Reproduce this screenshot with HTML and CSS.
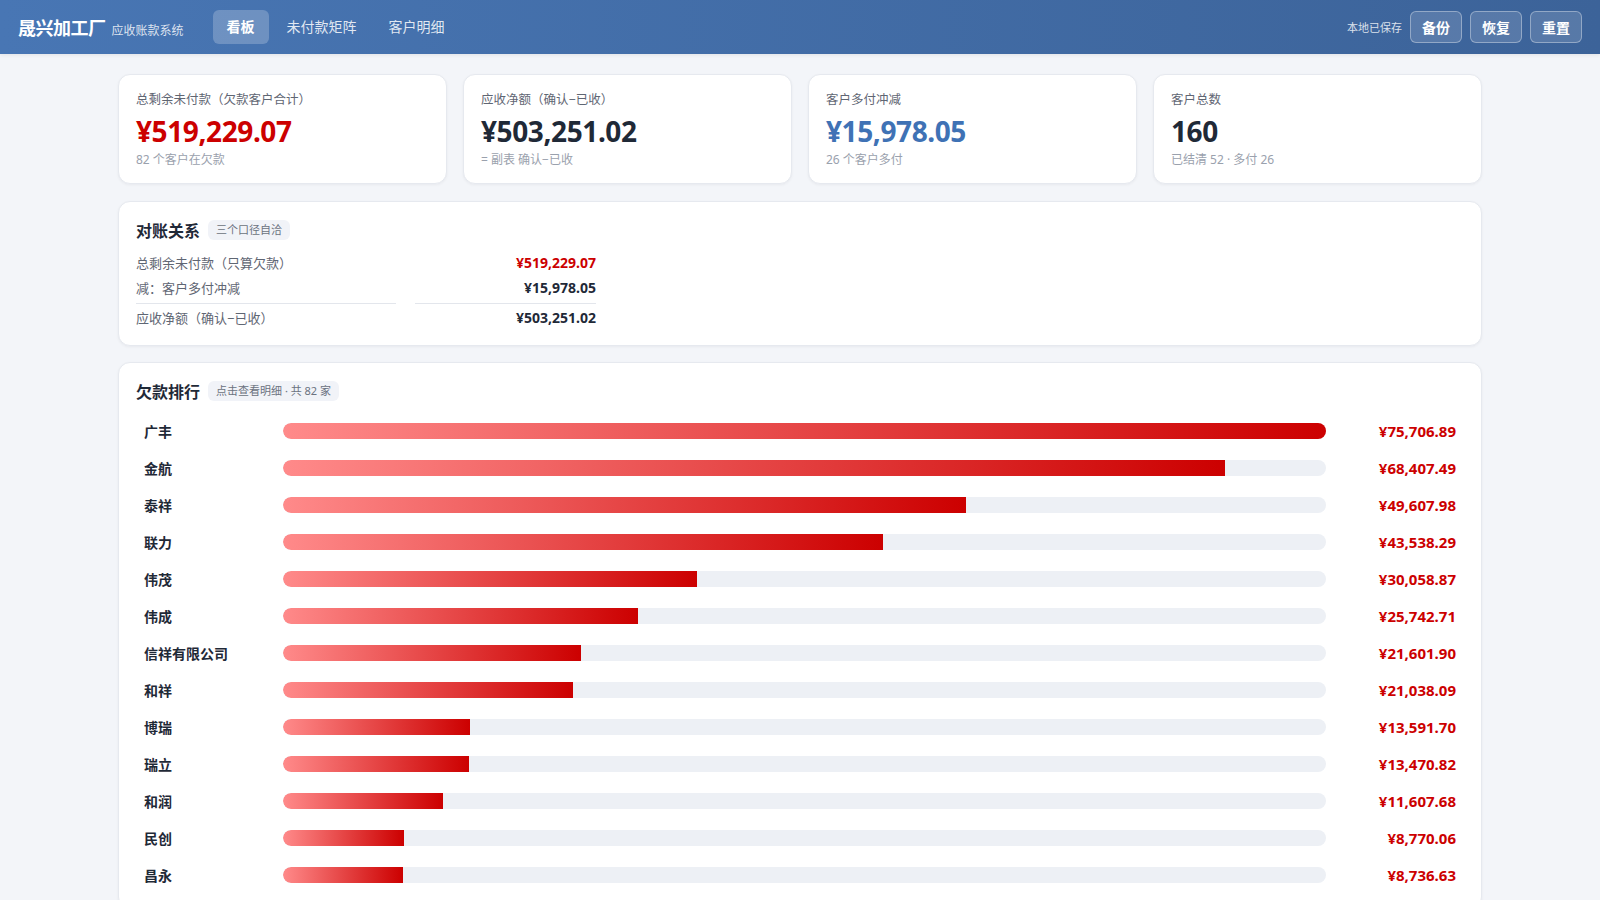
FILE: index.html
```html
<!doctype html>
<html lang="zh-CN">
<head>
    <meta charset="utf-8"/>
    <title>晟兴加工厂 应收账款系统</title>
    <link rel="stylesheet" href="styles.css">
</head>
<body>

    <!--顶栏-->
    <div class="topbar">
        <div class="brand">
            <span class="brand-name">晟兴加工厂</span>
            <span class="brand-sub">应收账款系统</span>
        </div>
        <ul class="nav">
            <li class="current">看板</li>
            <li>未付款矩阵</li>
            <li>客户明细</li>
        </ul>
        <div class="tools">
            <span class="saved">本地已保存</span>
            <button class="btn">备份</button>
            <button class="btn">恢复</button>
            <button class="btn">重置</button>
        </div>
    </div>

    <div class="main">
        <!--统计卡片-->
        <div class="stats">
            <div class="card stat">
                <div class="stat-label">总剩余未付款（欠款客户合计）</div>
                <div class="stat-value red">¥519,229.07</div>
                <div class="stat-sub">82 个客户在欠款</div>
            </div>
            <div class="card stat">
                <div class="stat-label">应收净额（确认−已收）</div>
                <div class="stat-value">¥503,251.02</div>
                <div class="stat-sub">= 副表 确认−已收</div>
            </div>
            <div class="card stat">
                <div class="stat-label">客户多付冲减</div>
                <div class="stat-value blue">¥15,978.05</div>
                <div class="stat-sub">26 个客户多付</div>
            </div>
            <div class="card stat">
                <div class="stat-label">客户总数</div>
                <div class="stat-value">160</div>
                <div class="stat-sub">已结清 52 · 多付 26</div>
            </div>
        </div>

        <!--对账关系-->
        <div class="card block">
            <div class="block-head">
                <h2>对账关系</h2>
                <span class="tag">三个口径自洽</span>
            </div>
            <div class="recon">
                <div class="recon-label">总剩余未付款（只算欠款）</div>
                <div class="recon-num red">¥519,229.07</div>
                <div class="recon-label">减：客户多付冲减</div>
                <div class="recon-num">¥15,978.05</div>
                <div class="recon-label total">应收净额（确认−已收）</div>
                <div class="recon-num total">¥503,251.02</div>
            </div>
        </div>

        <!--欠款排行-->
        <div class="card block">
            <div class="block-head">
                <h2>欠款排行</h2>
                <span class="tag">点击查看明细 · 共 82 家</span>
            </div>
            <div class="rank">
                <div class="rank-row"><span class="rank-name">广丰</span><div class="track"><div class="fill" style="width:100%"></div></div><span class="rank-num">¥75,706.89</span></div>
                <div class="rank-row"><span class="rank-name">金航</span><div class="track"><div class="fill" style="width:90.358%"></div></div><span class="rank-num">¥68,407.49</span></div>
                <div class="rank-row"><span class="rank-name">泰祥</span><div class="track"><div class="fill" style="width:65.526%"></div></div><span class="rank-num">¥49,607.98</span></div>
                <div class="rank-row"><span class="rank-name">联力</span><div class="track"><div class="fill" style="width:57.509%"></div></div><span class="rank-num">¥43,538.29</span></div>
                <div class="rank-row"><span class="rank-name">伟茂</span><div class="track"><div class="fill" style="width:39.704%"></div></div><span class="rank-num">¥30,058.87</span></div>
                <div class="rank-row"><span class="rank-name">伟成</span><div class="track"><div class="fill" style="width:34.003%"></div></div><span class="rank-num">¥25,742.71</span></div>
                <div class="rank-row"><span class="rank-name">信祥有限公司</span><div class="track"><div class="fill" style="width:28.533%"></div></div><span class="rank-num">¥21,601.90</span></div>
                <div class="rank-row"><span class="rank-name">和祥</span><div class="track"><div class="fill" style="width:27.789%"></div></div><span class="rank-num">¥21,038.09</span></div>
                <div class="rank-row"><span class="rank-name">博瑞</span><div class="track"><div class="fill" style="width:17.953%"></div></div><span class="rank-num">¥13,591.70</span></div>
                <div class="rank-row"><span class="rank-name">瑞立</span><div class="track"><div class="fill" style="width:17.793%"></div></div><span class="rank-num">¥13,470.82</span></div>
                <div class="rank-row"><span class="rank-name">和润</span><div class="track"><div class="fill" style="width:15.332%"></div></div><span class="rank-num">¥11,607.68</span></div>
                <div class="rank-row"><span class="rank-name">民创</span><div class="track"><div class="fill" style="width:11.584%"></div></div><span class="rank-num">¥8,770.06</span></div>
                <div class="rank-row"><span class="rank-name">昌永</span><div class="track"><div class="fill" style="width:11.540%"></div></div><span class="rank-num">¥8,736.63</span></div>
            </div>
        </div>
    </div>

</body>
</html>
```

FILE: styles.css
```css
* {
    padding: 0;
    margin: 0;
    list-style: none;
    box-sizing: border-box;
}

body {
    background: #f3f5f9;
    font-family: "Noto Sans", "Noto Sans CJK SC", sans-serif;
    color: #1f2937;
}

/* 顶栏 */
.topbar {
    height: 54px;
    display: flex;
    align-items: center;
    padding: 0 18px;
    background: linear-gradient(90deg, #4876b4, #3c6399);
    box-shadow: 0 1px 4px rgba(0, 0, 0, 0.08);
    color: #fff;
}

.brand {
    display: flex;
    align-items: baseline;
    gap: 6px;
    margin-right: 29px;
}

.brand-name {
    font-size: 18px;
    font-weight: bold;
    letter-spacing: -0.5px;
}

.brand-sub {
    font-size: 12px;
    color: rgba(255, 255, 255, 0.82);
}

.nav {
    display: flex;
    gap: 4px;
}

.nav li {
    height: 34px;
    line-height: 34px;
    padding: 0 14px;
    border-radius: 6px;
    font-size: 14px;
    color: rgba(255, 255, 255, 0.85);
    cursor: pointer;
}

.nav li.current {
    background: rgba(255, 255, 255, 0.22);
    color: #fff;
    font-weight: bold;
}

.tools {
    margin-left: auto;
    display: flex;
    align-items: center;
    gap: 8px;
}

.saved {
    font-size: 11px;
    color: rgba(255, 255, 255, 0.82);
}

.btn {
    width: 52px;
    height: 32px;
    border: 1px solid rgba(255, 255, 255, 0.35);
    border-radius: 6px;
    background: rgba(255, 255, 255, 0.14);
    color: #fff;
    font-family: inherit;
    font-size: 14px;
    font-weight: bold;
    cursor: pointer;
}

/* 主体 */
.main {
    max-width: 1400px;
    margin: 0 auto;
    padding: 20px 18px 20px;
}

.card {
    background: #fff;
    border: 1px solid #e6e9ef;
    border-radius: 12px;
    box-shadow: 0 1px 3px rgba(15, 23, 42, 0.05);
}

.red {
    color: #cc0000;
}

.blue {
    color: #3f72b5;
}

.stats {
    display: grid;
    grid-template-columns: repeat(4, 1fr);
    gap: 16px;
    margin-bottom: 17px;
}

.stat {
    padding: 16px 17px 14px;
}

.stat-label {
    font-size: 12.5px;
    line-height: 18px;
    color: #5f6673;
}

.stat-value {
    margin-top: 6px;
    font-size: 28px;
    line-height: 33px;
    font-weight: bold;
    letter-spacing: -0.4px;
}

.stat-sub {
    margin-top: 3px;
    font-size: 12px;
    line-height: 18px;
    color: #9aa1ad;
}

.block {
    padding: 17px 17px 14px;
    margin-bottom: 16px;
}

.block-head {
    display: flex;
    align-items: center;
    gap: 8px;
    height: 22px;
}

.block-head h2 {
    font-size: 16px;
    font-weight: bold;
    color: #1f2937;
}

.tag {
    font-size: 11px;
    line-height: 20px;
    padding: 0 8px;
    border-radius: 6px;
    background: #f1f3f8;
    color: #6b7280;
}

/* 对账 */
.recon {
    display: grid;
    grid-template-columns: 260px 181px;
    column-gap: 19px;
    margin-top: 10px;
}

.recon-label,
.recon-num {
    font-size: 13px;
    line-height: 20.5px;
    padding: 2px 0;
}

.recon-label {
    color: #5f6673;
}

.recon-num {
    text-align: right;
    font-weight: bold;
    font-size: 14px;
}

.recon .total {
    margin-top: 3px;
    padding-top: 4px;
    border-top: 1px solid #e3e6ec;
}

/* 排行 */
.rank {
    margin-top: 11px;
}

.rank-row {
    display: grid;
    grid-template-columns: 127px 1fr 118px;
    column-gap: 12px;
    align-items: center;
    height: 37px;
    padding: 0 8px;
    cursor: pointer;
}

.rank-name {
    font-size: 14px;
    font-weight: bold;
    color: #1f2937;
}

.track {
    height: 16px;
    border-radius: 8px;
    background: #edf0f5;
    overflow: hidden;
}

.fill {
    height: 100%;
    border-radius: 8px 0 0 8px;
    background: linear-gradient(90deg, #ff8a8a, #cc0000);
}

.rank-num {
    text-align: right;
    font-size: 15px;
    font-weight: bold;
    color: #cc0000;
}
```
